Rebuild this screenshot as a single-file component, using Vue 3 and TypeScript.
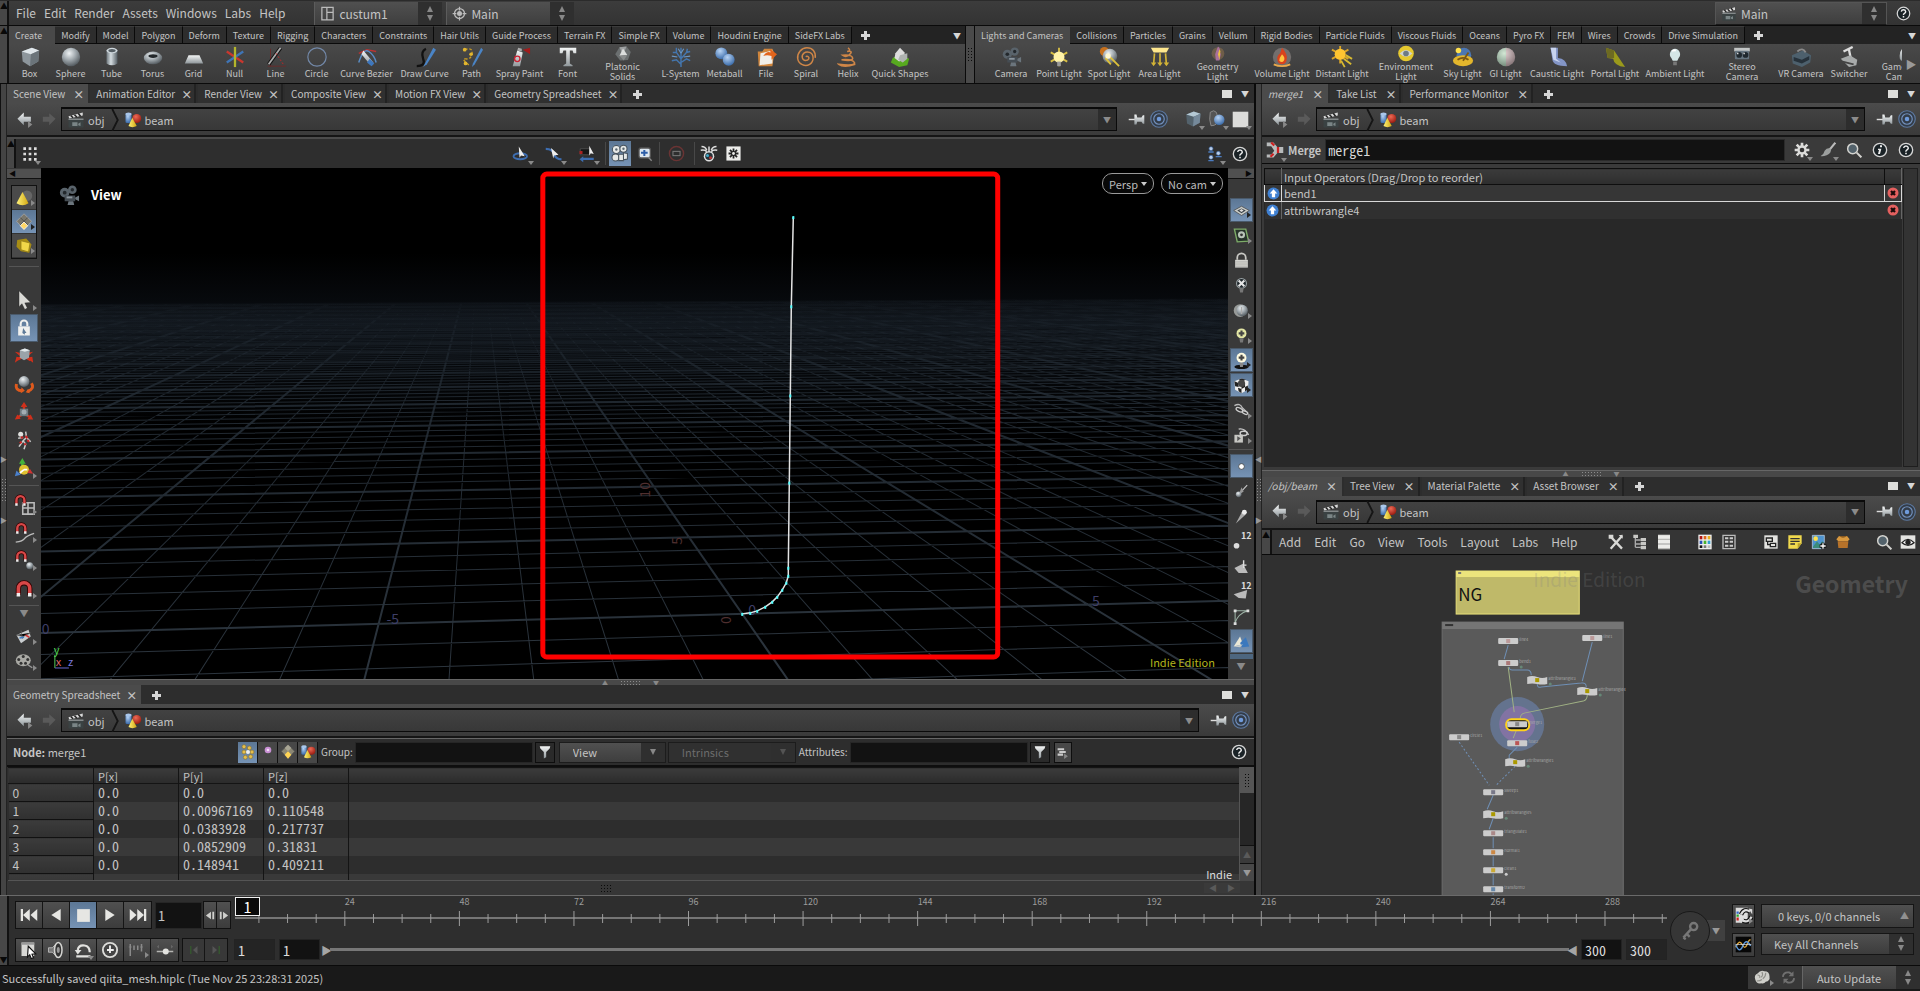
<script setup lang="ts">
import { h, ref } from 'vue'

type Tool = { n: string; l: string; w: number }

const spark = (c: string) => `<path d="M12 2v20M3 7l18 10M3 17 21 7" stroke="${c}" stroke-width="2"/>`
const magnet = '<path d="M4 17v-7a6.500 6.500 0 0 1 13 0v7" fill="none" stroke="#300" stroke-width="6"/><path d="M4 16v-6a6.500 6.500 0 0 1 13 0v6" fill="none" stroke="#d84848" stroke-width="4"/><path d="M2 15h4v4H2zM15 15h4v4h-4z" fill="#eee"/>'
const bulb = (c: string) => `<path d="M12 3a6 6 0 0 1 4 10l-1.500 3h-5L8 13a6 6 0 0 1 4-10z" fill="${c}"/><path d="M10 17h4v4h-4z" fill="#777"/>`
const reel = '<circle cx="8" cy="9" r="5" fill="#59636b"/><circle cx="8" cy="9" r="2" fill="#23282c"/><circle cx="16" cy="6" r="4.500" fill="#59636b"/><circle cx="16" cy="6" r="1.800" fill="#23282c"/><path d="M8 12h11v6H8z" fill="#454d54"/><path d="m19 14 4-2v6l-4-2zM12 18h5l1 4h-7z" fill="#6b757d"/><path d="M10 13h6v2h-6z" fill="#8b959d"/>'
const combo = '<rect x="2" y="3" width="8" height="13" rx="2" fill="url(#g-blue)"/><ellipse cx="6" cy="4" rx="4" ry="2" fill="#a9c6ea"/><circle cx="17" cy="10" r="6" fill="url(#g-red)"/><path d="m11 9 6 11q-6 3-11 0z" fill="url(#g-gold)"/>'

const icons: Record<string, string> = {
  box: '<path d="m3 6 11-4 8 3-1 12-9 5-8-5z" fill="#8d969c"/><path d="m3 6 11-4 8 3-9 4z" fill="#dfe6ea"/><path d="m13 9 9-4-1 12-9 5z" fill="#6b747a"/>',
  sphere: '<circle cx="12" cy="12" r="10" fill="url(#g-ball)"/>',
  tube: '<path d="M6 5v14q6 4 12 0V5z" fill="url(#g-tube)"/><ellipse cx="12" cy="5" rx="6" ry="3" fill="#cfd8dd"/><ellipse cx="12" cy="5" rx="4" ry="1.700" fill="#555e64"/>',
  torus: '<ellipse cx="12" cy="13" rx="10" ry="7" fill="url(#g-ball)"/><ellipse cx="12" cy="11" rx="5" ry="2" fill="#23282b"/>',
  grid: '<path d="M6 10h12l4 9H2z" fill="url(#g-silver)"/>',
  nul: '<path d="m3 6 18 12" stroke="#c8372e" stroke-width="2.500"/><path d="m3 18 18-12" stroke="#3f74b5" stroke-width="2.500"/><path d="M12 1v22" stroke="#b3b52c" stroke-width="2.500"/>',
  line: '<path d="M3 22h20M6 3v19" stroke="#6a2a2a" stroke-width="1"/><path d="m4 20 13-18" stroke="#111" stroke-width="4"/><path d="m4 20 13-18" stroke="#aaa" stroke-width="2"/><path d="m12 8 8 12" stroke="#c22" stroke-dasharray="2 2"/>',
  circle: '<circle cx="12" cy="12" r="10" fill="none" stroke="#7288a8" stroke-width="1.300"/>',
  bezier: '<path d="m3 8 9-4 10 2" fill="none" stroke="#b33" stroke-width="1.500"/><path d="M3 18Q8 2 14 6t8 12" fill="none" stroke="#5a8cc4" stroke-width="1.600"/><path d="m8 5 11 13-3 3L6 9z" fill="url(#g-silver)"/><path d="m15 14 5 5-3 3-5-4z" fill="#3e77bd"/>',
  draw: '<path d="M3 22q10 0 7-8T13 3" fill="none" stroke="#111" stroke-width="2.500"/><path d="m21 2-9 17-2 4 4-3 10-16z" fill="#4a84c6"/>',
  path: '<path d="M4 4q9-3 8 4T5 14t5 8" fill="none" stroke="#c69b24" stroke-width="1.500" stroke-dasharray="3 2"/><circle cx="4" cy="4" r="2" fill="#e2b62f"/><circle cx="11" cy="9" r="2" fill="#e2b62f"/><circle cx="5" cy="19" r="2" fill="#e2b62f"/><path d="m22 2-9 17-1 4 3-3 9-16z" fill="#4a84c6"/>',
  spray: '<path d="m9 5 6 2-3 15H4z" fill="url(#g-silver)"/><circle cx="9" cy="14" r="3" fill="none" stroke="#c23" stroke-width="1.500"/><path d="m10 2 4 1v3l-5-1z" fill="#aaa"/><path d="m15 4 8-2v7z" fill="#a11c1c"/>',
  font: '<path d="M3 2h18v6h-3l-1-3h-3v14l3 2v1H7v-1l3-2V5H7L6 8H3z" fill="url(#g-silver)"/>',
  platonic: '<path d="m7 3 10-1 6 8-4 11-11 1-7-9z" fill="#6b6f70"/><path d="m7 3 10-1-5 12z" fill="#9c9fa0"/><path d="m12 5 6 9-11 1z" fill="#dcdedd"/><path d="m7 15 11-1-5 8z" fill="#898c8c"/>',
  lsystem: '<path d="M12 23v-9m0 6-5-5-5 1m10-2-5-7-4 0m4 0 0-5m5 12V2m0 12 6-7 1-4m-1 4 4-1m-10 12 6-4 4 2" fill="none" stroke="#4476ae" stroke-width="1.600"/><path d="m8 12-6-1m10-3L9 3m3 5 3-5m0 9 7-1" stroke="#6b97c6" stroke-width="1.200"/>',
  metaball: '<circle cx="8" cy="8" r="6.500" fill="url(#g-blue)"/><circle cx="16" cy="15" r="6.500" fill="url(#g-blue)"/>',
  file: '<path d="M3 6h5l2-3h9l2 5-2 14H4z" fill="#cf853c"/><path d="m6 8 13-3v14L5 21z" fill="#f0eee9"/><path d="M9 11q4-6 8-4l-1-4 8 6-6 6v-4q-5-2-9 0z" fill="#e2641c"/>',
  spiral: '<path d="M12 12c1-2 4 0 3 2s-6 3-7-1 3-8 8-6 5 10 0 13-12 0-13-6 4-12 10-12 10 4 9 11" fill="none" stroke="#cf8647" stroke-width="1.600"/>',
  helix: '<path d="M12 2q4 3-1 4 7-1 3 3t-8 1q10-1 11 3t-12 2q12-1 14 3t-17 2q5 4 18 0" fill="none" stroke="#cf8647" stroke-width="1.700"/>',
  quick: '<path d="m4 13 7-4 11 5-2 7-9 2-9-5z" fill="#57a91f"/><path d="m7 8 5-6 5 5v7l-6 3-5-4z" fill="#dcdcdc"/><path d="m12 10 8-2v6l-5 4-5-3z" fill="#aeb2b0"/>',
  camera: reel,
  pointlight: spark('#d8bf45') + '<circle cx="12" cy="12" r="6" fill="#fff3a8"/><path d="M10 17h4v5h-4z" fill="#999"/>',
  spotlight: '<circle cx="7" cy="6" r="5" fill="#c7701c"/><circle cx="13" cy="11" r="8" fill="url(#g-ball)"/><path d="m11 10 12 12M14 20l-6-7" stroke="#dcc03b" stroke-width="2"/><circle cx="11" cy="11" r="3" fill="#fff8d0"/>',
  arealight: '<path d="M2 2h20l-3 5H5z" fill="#ffe88e"/><path d="M6 8 5 20M12 8v12M18 8l1 12" stroke="#d2b336" stroke-width="1.800"/><path d="m2 18 3 4 3-4zM9 18l3 4 3-4zM16 18l3 4 3-4z" fill="#d2b336"/>',
  geolight: '<circle cx="12" cy="12" r="9" fill="#b98a4f" opacity=".35"/><path d="M12 2q4 3 2 6l2 5-2 9h-5l-1-9 2-6z" fill="#a9709c"/><path d="M14 6q3 3 1 6l-1 9-2-8z" fill="#eec23f"/>',
  volumelight: '<circle cx="12" cy="12" r="10" fill="#918b88" opacity=".6"/><path d="M12 2q7 8 5 13a5 5 0 0 1-10 0q-1-4 3-7 1-3 2-6z" fill="#d9421c"/><path d="M12 9q4 4 2 7t-5 0q0-3 3-7z" fill="#ffc23d"/><path d="M3 20q9 4 18 0" stroke="#e9a94c" stroke-width="2" fill="none"/>',
  distantlight: '<g transform="translate(-2 -3)">' + spark('#dca527') + '<circle cx="12" cy="12" r="6" fill="#ffc531"/></g><path d="m14 14 8 6M11 16l4 7M16 10l7 4" stroke="#d8ba31" stroke-width="2"/>',
  envlight: '<circle cx="12" cy="12" r="11" fill="#e6c92f"/><path d="M3 12q9-10 18 0-9 9-18 0z" fill="#cfd3d2"/><circle cx="12" cy="12" r="4" fill="#6e7b83"/>',
  skylight: '<circle cx="13" cy="10" r="8" fill="#4b76b2"/><circle cx="7" cy="5" r="3" fill="#ffe04d"/><ellipse cx="12" cy="16" rx="11" ry="6" fill="#e3b62c"/><path d="M6 15q6-4 12 0M12 16l6-9" stroke="#7b5713" stroke-width="2" fill="none"/>',
  gilight: '<circle cx="12" cy="12" r="10" fill="url(#g-ball)"/><path d="M12 2a10 10 0 0 1 0 20z" fill="#d8a3a0" opacity=".4"/><path d="M12 2a10 10 0 0 0 0 20z" fill="#a9d6a5" opacity=".4"/>',
  caustic: '<path d="M5 2h8v11q9 1 10 9-15 0-16-7z" fill="#8395c6"/><path d="M5 2h6v12l5 4-8-3z" fill="#c9d4ee"/>',
  portal: '<path d="m2 2 9 3 12 18q-12-1-13-9l-6-1z" fill="#9a991b"/><path d="m2 2 9 3 0 8-7 0z" fill="#6d6a22"/>',
  ambient: bulb('#d5e6e6') + '<path d="M9 6q2-2 4-1" stroke="#fff" stroke-width="2"/>',
  stereo: '<rect x="1" y="4" width="22" height="5" fill="#c3c6c6"/><rect x="2" y="8" width="20" height="12" rx="1" fill="#66747f"/><circle cx="8" cy="14" r="4" fill="#20282e"/><circle cx="17" cy="14" r="4" fill="#20282e"/><path d="M5 11h2v2H5zM14 11h2v2h-2z" fill="#ddd"/>',
  vr: '<path d="m2 10 12-5 9 5-1 8-9 5-10-4z" fill="#4d606d"/><path d="m4 12 9 3 8-4v4l-8 4-9-3z" fill="#27323b"/><path d="M8 6q6-5 9 1" stroke="#8a8a8a" stroke-width="2" fill="none"/>',
  switcher: '<path d="m6 6 10-5M12 4l2 10" stroke="#ddd" stroke-width="2.500"/><path d="m3 14 10-4 8 5-1 6-8 2z" fill="#a7aaaa"/><path d="m5 17 12 3" stroke="#444" stroke-width="2"/>',
  gamepad: '<path d="M18 2q-11 4-9 17 2 6 6 1l3-6z" fill="url(#g-silver)"/>',
  layout: '<path d="M3 2h18v20H3zM11 2v20M11 10h10" fill="none" stroke="#bcbcbc" stroke-width="2"/>',
  target: '<circle cx="12" cy="12" r="8" fill="none" stroke="#bcbcbc" stroke-width="2"/><circle cx="12" cy="12" r="4" fill="#bcbcbc"/><path d="M12 1v6M12 17v6M1 12h6M17 12h6" stroke="#bcbcbc" stroke-width="2"/>',
  clap: '<path d="M2 10h20v12H2z" fill="#3a4243"/><path d="m2 7 19-5v4L3 10z" fill="#d8d8d8"/><path d="m5 6 3 3M10 5l3 3M15 3l3 4" stroke="#222" stroke-width="2"/><path d="M2 10h20v2H2z" fill="#84898a"/><path d="M7 15h7v5H7zM15 17l3-2v5l-3-1z" fill="#7a8586"/>',
  help: '<circle cx="12" cy="12" r="10" fill="#1a2226" stroke="#d6d6d6" stroke-width="2"/><path d="M8.500 9q.500-3 3.500-3t3.500 3q0 1.500-2 2.800T12 14.500" fill="none" stroke="#eee" stroke-width="2.200"/><path d="M10.800 16h2.400v2.500h-2.400z" fill="#eee"/>',
  info: '<circle cx="12" cy="12" r="10" fill="#1a2226" stroke="#d6d6d6" stroke-width="2"/><path d="M12 5h3v3h-3zM9 10h5l-2 8h-3l1.500-6H9z" fill="#eee"/>',
  back: '<path d="m2 11 9-9v6h10v7H11v5z" fill="url(#g-silver)"/><path d="m17 14 6 5-6 5z" fill="#888"/>',
  fwd: '<path d="m22 11-9-8v5H4v7h9v5z" fill="#5a5a5a"/>',
  combo,
  pin: '<path d="M1 12h9" stroke="#ddd" stroke-width="2"/><path d="M9 5h3l1 4h6l2-3h2v12h-2l-2-3h-6l-1 4H9z" fill="url(#g-silver)"/>',
  rings: '<circle cx="12" cy="12" r="11" fill="#333c48" stroke="#5d7aa3" stroke-width="1.500"/><circle cx="12" cy="12" r="7" fill="none" stroke="#7391bd" stroke-width="1.600"/><circle cx="12" cy="12" r="3" fill="#6f9bdc"/>',
  cube: '<path d="m3 6 10-4 9 3-1 12-9 5-8-4z" fill="#53626c"/><path d="m3 6 10-4 9 3-9 4z" fill="#b4c8d4"/><path d="m13 9 9-4-1 12-9 5z" fill="#75899a"/>',
  shade: '<path d="M3 3q5-4 8 0l3 9q-1 9-10 9-3-8-1-18z" fill="#555" stroke="#999"/><circle cx="15" cy="13" r="7" fill="url(#g-blue)"/>',
  white: '<path d="M1 1h22v22H1z" fill="#dcdcda"/>',
  dots: '<g fill="#ddd"><path d="M2 2h4v4H2zM10 2h4v4h-4zM18 2h4v4h-4zM2 10h4v4H2zM10 10h4v4h-4zM18 10h4v4h-4zM2 18h4v4H2zM10 18h4v4h-4zM18 18h4v4h-4z"/></g>',
  sel1: '<ellipse cx="11" cy="15" rx="9" ry="4" fill="none" stroke="#3d6db0" stroke-width="2.500"/><path d="m9 2 8 13-5-1-2 3z" fill="#eee"/>',
  sel2: '<path d="M1 5q9 0 11 7t10 7" fill="none" stroke="#3d6db0" stroke-width="3"/><path d="m8 4 10 9-6 1-1 4z" fill="#eee"/>',
  sel3: '<path d="M3 5h13v8H3z" fill="#161616" stroke="#555"/><path d="m2 19 5-4v2h14v3H7v3z" fill="#3d6db0"/><path d="m15 1 6 11-4-1-2 3z" fill="#eee"/><path d="M2 8h4v4H2z" fill="#a22"/>',
  people: '<g fill="#e6e9e7" stroke="#46525c" stroke-width="1.300"><circle cx="8" cy="7" r="5"/><circle cx="17" cy="6" r="4.500"/><circle cx="7" cy="17" r="4.500"/><path d="M11 13h6v8h-6zM17 11l5 1v7l-5 1z"/></g><circle cx="8" cy="7" r="1.500" fill="#5b6872"/><circle cx="17" cy="6" r="1.500" fill="#5b6872"/>',
  viewfit: '<rect x="3" y="3" width="17" height="15" rx="3" fill="#dde6ef" stroke="#555" stroke-width="2"/><path d="M11 6v9M6 10h10" stroke="#2d5ea8" stroke-width="3"/><path d="m17 17 5 5" stroke="#888" stroke-width="2"/>',
  deny: '<circle cx="12" cy="12" r="10" fill="none" stroke="#6a3434" stroke-width="2"/><rect x="7" y="9" width="10" height="6" fill="none" stroke="#777" stroke-width="1.500"/>',
  bug: '<circle cx="12" cy="15" r="7" fill="#ddd"/><circle cx="12" cy="15" r="5" fill="#263238"/><circle cx="10" cy="14" r="2" fill="#3fa9c9"/><circle cx="14" cy="17" r="2" fill="#b33"/><path d="M2 2q5 0 7 5M22 2q-5 0-7 5M1 7q6-1 8 2M23 7q-6-1-8 2M12 2v7" stroke="#ddd" stroke-width="2" fill="none"/>',
  gearbox: '<path d="M2 2h20v20H2z" fill="#ececea"/><g stroke="#222" stroke-width="2.500"><path d="M12 5v14M5 12h14M7 7l10 10M7 17 17 7"/></g><circle cx="12" cy="12" r="2" fill="#ececea"/>',
  tree3: '<g fill="#b9cde8" stroke="#3b64a0"><circle cx="6" cy="4" r="3"/><circle cx="17" cy="11" r="3"/><circle cx="6" cy="17" r="3"/></g><path d="M2 8h8v2H2zM13 15h9v2h-9zM2 21h8v2H2z" fill="#4b7cc0"/>',
  cone: '<circle cx="16" cy="9" r="7" fill="#666"/><path d="m10 4 8 15q-8 5-16 0z" fill="url(#g-gold)"/>',
  diamond: '<path d="m12 1 10 10-10 11L2 11z" fill="#7a776c" stroke="#aaa"/><path d="M7 6l10 10M17 6 7 16" stroke="#444"/><path d="m12 12 5 5-5 5-5-5z" fill="#ffd768" stroke="#fff"/>',
  goldbox: '<path d="m3 4 12-2 7 8-3 11-11-2-6-6z" fill="#a88d14"/><path d="m8 5 12 3-2 12-10-3z" fill="#f1d748" stroke="#8d7818"/>',
  arrow: '<path d="m6 1 14 14-7 .500 3 6-3 2-3.500-7L6 20z" fill="#dadad6" stroke="#222" stroke-width=".500"/>',
  lock: '<path d="M8 10V7a4 4 0 0 1 8 0v3" fill="none" stroke="#f0f0ee" stroke-width="2.500"/><path d="M5 10h14v11H5z" fill="#f0f0ee"/><path d="m11 12 4 6-2 0v2l-3-2z" fill="#5f7b99"/>',
  move: '<path d="m1 20 2-7 6 1zM23 20l-1-7-7 1zM1 7l6 1v4zM23 7l-6 1v4z" fill="#d1301b"/><path d="m4 16 5-2M20 17l-5-3" stroke="#d1301b" stroke-width="3"/><path d="m7 5 6-2 6 2-1 9-6 3-5-3z" fill="#9aa3a9"/><path d="m7 5 6-2 6 2-6 2z" fill="#e2e8ea"/>',
  rotate: '<path d="M3 12q-2 8 7 8m11-9q4 7-5 10" stroke="#df5a1d" stroke-width="3.500" fill="none"/><path d="m9 16 4 4-5 3zM19 23l-5-1 3-4z" fill="#df5a1d"/><circle cx="12" cy="9" r="6.500" fill="url(#g-ball)"/>',
  scale: '<path d="m12 0 4 6H8zM1 21l3-6 4 5zM23 21l-7 0 4-6z" fill="#d1301b"/><path d="M12 5v5M5 18l5-3M19 18l-5-3" stroke="#d1301b" stroke-width="3"/><path d="M7 8h10v9H7z" fill="#6f7a80"/><circle cx="12" cy="12" r="3" fill="#a3adb3"/>',
  pose: '<circle cx="8" cy="5" r="3" fill="#e0e0de"/><path d="m14 2 1 7-4 4-5 7M11 13l3 4-2 6M5 10l6-1M15 9l5 5" stroke="#ccc" stroke-width="1.800" fill="none"/><path d="m14 7 2 3M7 16l2-2M13 18l1-2M16 12l2 2M8 9h3" stroke="#c22" stroke-width="2.500"/>',
  handles: '<path d="m10 0 4 7H6z" fill="#45b23b"/><path d="M10 6v6" stroke="#45b23b" stroke-width="3"/><circle cx="12" cy="14" r="6" fill="#dfc12f"/><path d="m1 22 2-7 5 5z" fill="#4a80cb"/><path d="m23 19-7-1 3-5z" fill="#cf3434"/><path d="M12 14h4M12 14l-5 4" stroke="#fff" stroke-width="2"/>',
  maggrid: '<path d="M10 10h13v13H10zM16 10v13M10 16h13" stroke="#bbb" stroke-width="1.800" fill="none"/><g transform="scale(.7)">' + magnet + '</g>',
  magcurve: '<path d="M2 23q8-1 10-4t11-6" stroke="#bbb" stroke-width="1.500" fill="none"/><g transform="translate(1 0) scale(.7)">' + magnet + '</g>',
  magpoint: '<g transform="translate(1 0) scale(.7)">' + magnet + '</g><circle cx="18" cy="18" r="4" fill="url(#g-ball)"/>',
  magnet: '<g transform="translate(1 2)">' + magnet + '</g>',
  snip: '<path d="m2 12 16-7 3 9-13 9z" fill="#c9cdcf"/><path d="m8 6 2 11M2 12l9 2 10-5" stroke="#666"/><path d="m14 12 5 3" stroke="#c33" stroke-width="2"/><path d="m6 16 6-1" stroke="#3d7dc4" stroke-width="2"/>',
  film: '<ellipse cx="11" cy="11" rx="10" ry="8" fill="#a9a9a4"/><g fill="#333"><circle cx="11" cy="6" r="2"/><circle cx="5" cy="10" r="2"/><circle cx="17" cy="10" r="2"/><circle cx="8" cy="15" r="2"/><circle cx="14" cy="15" r="2"/></g><path d="m17 17 6 4" stroke="#999" stroke-width="2"/>',
  plane: '<path d="m12 6 11 6-11 7L1 12z" fill="#c8cbc8" stroke="#444"/><path d="m12 9 6 3-6 4-6-4z" fill="#3a4248"/><path d="m12 10 3 2-3 2-3-2z" fill="#ddd"/>',
  ghost: '<path d="m2 3 16 0 4 17-16 1z" fill="#26332a" stroke="#7dac68" stroke-width="2"/><circle cx="12" cy="11" r="5" fill="#b8c5b8"/><circle cx="12" cy="11" r="2" fill="#333"/>',
  padlock: '<path d="M6 11V8a6 6 0 0 1 12 0v3" fill="none" stroke="#c8c8c4" stroke-width="2.500"/><path d="M3 11h18v11H3z" fill="#d5d5d0"/><path d="M3 14h18M3 17h18M3 20h18" stroke="#a5a5a0"/>',
  lampx: '<circle cx="12" cy="9" r="7" fill="#20282c" stroke="#9aa2a4" stroke-width="1.500"/><path d="M9 16h6l-1 6h-4z" fill="#777"/><path d="m8 5 8 8M16 5l-8 8" stroke="#e6e6e6" stroke-width="3"/>',
  lampdisc: '<circle cx="10" cy="12" r="9" fill="#979a98"/><circle cx="13" cy="12" r="8" fill="url(#g-ball)"/><path d="M12 7v10" stroke="#aaa" stroke-width="2"/>',
  lampplus: '<circle cx="12" cy="9" r="7" fill="#e3e6a5"/><path d="M9 16h6l-1 6h-4z" fill="#777"/><path d="M12 5v8M8 9h8" stroke="#444" stroke-width="3"/>',
  lampfloor: '<ellipse cx="12" cy="21" rx="10" ry="3" fill="#111"/><circle cx="12" cy="8" r="7" fill="#fffbe0"/><path d="M9 15h6l-1 6h-4z" fill="#888"/><path d="M12 4v8M8 8h8" stroke="#444" stroke-width="3"/>',
  checker: '<path d="m2 6 10-4 10 4-1 12-9 5-9-5z" fill="#eee"/><path d="m2 6 5 2 1 6-5-1zM12 10l5-2v6l-5 3zM7 15l5 2v6l-4-3zM17 14l4-2v6l-4 2zM8 4l6 2 4-2-6-2z" fill="#222"/><circle cx="12" cy="9" r="5" fill="#444"/>',
  glasses: '<path d="M2 5q8-4 11 3l8 8" stroke="#bbb" stroke-width="2" fill="none"/><ellipse cx="9" cy="11" rx="5" ry="2.500" transform="rotate(25 9 11)" fill="#333" stroke="#ccc" stroke-width="1.800"/><ellipse cx="17" cy="15" rx="4" ry="2" transform="rotate(25 17 15)" fill="#333" stroke="#ccc" stroke-width="1.800"/>',
  glassbox: '<path d="M8 3q8-2 14 8" stroke="#ccc" stroke-width="2" fill="none"/><ellipse cx="15" cy="9" rx="5" ry="3" fill="#333" stroke="#ccc" stroke-width="2"/><path d="M2 11h12v11H2z" fill="#c7c7c3"/><path d="m6 13 5 3-5 4z" fill="#555"/>',
  pt: '<circle cx="12" cy="12" r="4" fill="#fff" stroke="#333"/>',
  ptnormal: '<path d="m8 16 12-13" stroke="#ccc" stroke-width="1.500"/><path d="m12 6 3 6-7 5z" fill="#999"/><circle cx="8" cy="16" r="4" fill="url(#g-ball)"/>',
  pttrail: '<path d="m4 22 9-17 5 4z" fill="#aaa"/><circle cx="16" cy="6" r="3.500" fill="#eee"/>',
  ptnum: '<circle cx="5" cy="18" r="4" fill="#ddd"/>',
  prim: '<path d="m2 14 12-6 7 13-13 0z" fill="#bbb"/><path d="M15 14V3m0 7h4" stroke="#ddd" stroke-width="2"/>',
  primnum: '<path d="m1 16 19-6-2 12-10-1z" fill="#bbb"/>',
  hull: '<path d="M3 21V4h18Q7 8 3 21z" fill="none" stroke="#9db3a6" stroke-width="1.500"/><path d="M1 2h4v4H1zM19 2h4v4h-4zM1 20h4v4H1z" fill="#ddd"/>',
  slope: '<path d="m1 19 9-14 4 11z" fill="#eae7d6"/><path d="m10 14 8-8 5 13-10 1z" fill="#3b78bd"/><path d="m1 19 13-3-4 4z" fill="#c9ccc8"/>',
  merge: '<path d="M1 2h9l5 6h8v8h-8l-5 6H1v-4h6l4-5-4-6H1z" fill="#b7babb"/><path d="m7 2 4 4M6 21l4-4M16 8v8" stroke="#c22" stroke-width="3"/>',
  gear: '<g stroke="#dcdcda" stroke-width="4"><path d="M12 1v22M1 12h22M4 4l16 16M4 20 20 4"/></g><circle cx="12" cy="12" r="7" fill="#dcdcda"/><circle cx="12" cy="12" r="3.500" fill="#333"/>',
  brush: '<path d="m23 1-9 11" stroke="#bbb" stroke-width="3"/><path d="M16 10q2 6-6 10-6 2-9 1 5-3 6-8 4-5 9-3z" fill="#9c9f9e"/>',
  search: '<circle cx="10" cy="10" r="7.500" fill="#53626b" stroke="#d4d4d0" stroke-width="2.200"/><path d="m16 16 7 7" stroke="#d4d4d0" stroke-width="3"/>',
  up: '<circle cx="12" cy="12" r="11" fill="#3f80d2"/><path d="m12 4 7 8h-4v7H9v-7H5z" fill="#fff"/>',
  del: '<circle cx="12" cy="12" r="11" fill="#e4605f"/><path d="m8 8 8 8M16 8l-8 8" stroke="#1a0a0a" stroke-width="4.500"/>',
  tools: '<path d="M3 3 21 22M21 3 4 22" stroke="#d9d9d6" stroke-width="3.500"/><path d="M1 1h7v6H1zM16 2l6-1v6z" fill="#d9d9d6"/>',
  hier: '<path d="M5 4v16M5 9h8M5 15h8M5 20h8" stroke="#aaa" stroke-width="2" fill="none"/><path d="M2 1h7v5H2zM13 6h8v5h-8zM13 12h8v5h-8zM13 18h8v5h-8z" fill="#c9c9c6"/>',
  rows: '<path d="M3 1h18v22H3z" fill="#b9b9b6"/><path d="M3 2h18v5H3zM3 9h18v5H3zM3 16h18v5H3z" fill="#ecece9"/>',
  palette: '<path d="M2 1h20v22H2z" fill="#eee"/><path d="M4 3h4v5H4z" fill="#b01818"/><path d="M10 3h4v5h-4z" fill="#e0641c"/><path d="M16 3h4v5h-4z" fill="#e8b020"/><path d="M4 10h4v5H4z" fill="#2850b8"/><path d="M10 10h4v5h-4z" fill="#49b02c"/><path d="M16 10h4v5h-4z" fill="#30a0d0"/><path d="M4 17h4v4H4z" fill="#111"/><path d="M10 17h4v4h-4z" fill="#777"/><path d="M16 17h4v4h-4z" fill="#bbb"/>',
  cells: '<path d="M3 2h18v20H3z" fill="none" stroke="#bbb" stroke-width="2"/><path d="M6 5h5v3H6zM13 5h5v3h-5zM6 10h5v3H6zM13 10h5v3h-5zM6 16h5v3H6zM13 16h5v3h-5z" fill="#ccc"/>',
  window: '<path d="M2 2h20v20H2z" fill="#e4e4e1"/><path d="M5 6h9v5H5zM11 14h8v5h-8zM7 11v5h4" fill="none" stroke="#222" stroke-width="2"/>',
  note: '<path d="M2 2h20v12l-6 8H2z" fill="#f0d94e"/><path d="M5 7h14M5 11h14M5 15h7" stroke="#333" stroke-width="2"/><path d="M22 14h-6v8z" fill="#b8a22c"/>',
  image: '<path d="M2 2h18v20H2z" fill="#4f94cf" stroke="#cde"/><circle cx="7" cy="7" r="3.500" fill="#ffe04d"/><path d="m3 19 6-8 4 5 4-5 3 4v6H3z" fill="#3b8c7c"/><path d="M18 13v10M13 18h10" stroke="#111" stroke-width="5"/><path d="M18 14v8M14 18h8" stroke="#fff" stroke-width="2"/>',
  crate: '<path d="m2 8 4-5h12l4 5-3 3H5z" fill="#d8983f"/><path d="M4 11h16l-1 10H5z" fill="#b6722a"/><path d="M6 3q6 5 12 0" fill="#8a5a20"/>',
  eye: '<path d="M1 2h22v20H1z" fill="#e4e4e1"/><path d="M3 13q9-10 18 0-9 8-18 0z" fill="#fff" stroke="#222" stroke-width="2"/><circle cx="12" cy="12.500" r="4" fill="#222"/>',
  ptcloud: '<g fill="#e6bf4a" stroke="#88743a"><circle cx="6" cy="4" r="3"/><circle cx="14" cy="6" r="3"/><circle cx="6" cy="12" r="3"/><circle cx="18" cy="12" r="3"/><circle cx="8" cy="20" r="3"/><circle cx="16" cy="19" r="3"/></g><circle cx="12" cy="12" r="3" fill="#eee"/>',
  vert: '<circle cx="12" cy="9" r="5" fill="#c890d4"/><circle cx="12" cy="9" r="2" fill="#f3dcf6"/>',
  diamond2: '<path d="m12 1 10 10-10 11L2 11z" fill="#8b8774" stroke="#555"/><path d="m12 11 5 5-5 6-5-6z" fill="#ffd454"/><path d="m12 1 5 5-5 5-5-5z" fill="#a8a594"/>',
  funnel: '<path d="M3 2h18l-1 4-6 6v9l-4 2V12L4 6z" fill="url(#g-silver)"/>',
  listadd: '<path d="M3 4h12v4H3zM6 9h12v4H6zM3 14h10v4H3z" fill="#ccc"/><path d="m15 14 7 5-7 5z" fill="#888"/>',
  first: '<path d="M1 4h3v16H1zM13 4v16L4 12zM23 4v16l-9-8z" fill="#e6e6e3"/>',
  prev: '<path d="M19 3v18L5 12z" fill="#e6e6e3"/>',
  stop: '<path d="M3 3h18v18H3z" fill="#e6e6e3"/>',
  play: '<path d="M5 3v18l14-9z" fill="#e6e6e3"/>',
  last: '<path d="M20 4h3v16h-3zM11 4v16l9-8zM1 4v16l9-8z" fill="#e6e6e3"/>',
  stepb: '<path d="M13 4v16L2 12zM16 4h4v16h-4z" fill="#d0d0cd"/>',
  stepf: '<path d="M11 4v16l11-8zM4 4h4v16H4z" fill="#d0d0cd"/>',
  page: '<path d="M2 2h17v18H2z" fill="#d8d8d5"/><path d="M2 2h17v3H2z" fill="#999"/><path d="m11 7 10 10-5 .500 2 5-3 1-2-5-3 3z" fill="#fff" stroke="#111" stroke-width="1.500"/>',
  sound: '<path d="M2 9h5l7-7v20l-7-7H2z" fill="#777" stroke="#ccc"/><ellipse cx="15" cy="12" rx="5" ry="10" fill="#333" stroke="#d5d5d2" stroke-width="2"/><ellipse cx="15" cy="12" rx="2" ry="4" fill="#999"/>',
  loop: '<path d="M5 12q1-7 9-6 7 1 7 9" fill="none" stroke="#e2e2df" stroke-width="3"/><path d="m1 12 9 0-5 6zM3 19h19v3H3z" fill="#e2e2df"/>',
  clock: '<circle cx="12" cy="12" r="9.500" fill="#444" stroke="#dcdcd9" stroke-width="2.500"/><path d="M12 6v10M8 12h9" stroke="#eee" stroke-width="2.500"/>',
  ticks: '<path d="M3 4v16M8 6v6M13 6v6M18 4v10" stroke="#8a8a8a" stroke-width="2"/><path d="M1 8h4M16 8h4" stroke="#8a8a8a"/>',
  slide: '<path d="M1 14h22" stroke="#b5b5b2" stroke-width="2"/><circle cx="13" cy="14" r="4" fill="#e2e2df"/><path d="M4 5v5L1 7.500zM20 5v5l3-2.500z" fill="#666"/>',
  kprev: '<path d="M4 4h3v16H4z" fill="#35552f"/><path d="M19 4v16l-9-8z" fill="#555"/>',
  knext: '<path d="M17 4h3v16h-3z" fill="#35552f"/><path d="M5 4v16l9-8z" fill="#555"/>',
  key: '<g fill="none" stroke="#777" stroke-width="3"><circle cx="16" cy="7" r="4.500"/><path d="M13 10 3 21M7 16l4 4M3 21l3 2"/></g>',
  keysync: '<path d="M1 1h16v20H1z" fill="#ddd"/><path d="M2 6h3v3H2z" fill="#36c"/><path d="M2 10h3v3H2z" fill="#2a2"/><path d="M2 14h3v4H2z" fill="#c22"/><path d="M20 6q-8-5-12 4m14 3q-4 9-12 5" fill="none" stroke="#111" stroke-width="6"/><path d="M20 6q-8-5-12 4m14 3q-4 9-12 5" fill="none" stroke="#ddd" stroke-width="3"/><path d="m18 2 5 1v7zM8 22l5-7-7 1z" fill="#ddd"/>',
  curves: '<path d="M1 1h22v22H1z" fill="#060606"/><path d="M1 16q5-12 9-4t7 0 5-6" stroke="#d8a33b" stroke-width="2" fill="none"/><path d="M1 12q5 14 10 2T22 14" stroke="#5c97d8" stroke-width="2" fill="none"/><path d="M1 12h22" stroke="#ddd"/>',
  brain: '<path d="M3 14q-2-6 3-8 4-5 9-3 7 0 7 7 1 6-5 7-2 3-6 2-6 2-8-5z" fill="#cfcfca"/><path d="M6 8q4 0 3 4m3-8q2 4-1 7m6-6q0 5-4 8m-8 3q5 0 7-2" stroke="#8f8f8a" fill="none" stroke-width="1.500"/>',
  sync: '<path d="M3 11q1-8 10-7l5 3M21 13q-1 8-10 7l-5-3" fill="none" stroke="#707070" stroke-width="3"/><path d="M20 2v8h-8zM4 22v-8h8z" fill="#707070"/>',
}

const Ico = (p: { n: string; s?: number }) =>
  h('svg', { viewBox: '0 0 24 24', width: p.s ?? 18, height: p.s ?? 18, 'aria-hidden': 'true', innerHTML: icons[p.n] ?? '' })
Ico.props = ['n', 's']

const tools = (rows: string): Tool[] =>
  rows.split('|').map((r) => {
    const [n, l, w] = r.split(':')
    return { n, l, w: Number(w) }
  })

const shelves = [
  {
    cls: 'left',
    tabs: ['Create', 'Modify', 'Model', 'Polygon', 'Deform', 'Texture', 'Rigging', 'Characters', 'Constraints', 'Hair Utils', 'Guide Process', 'Terrain FX', 'Simple FX', 'Volume', 'Houdini Engine', 'SideFX Labs'],
    tools: tools('box:Box:41|sphere:Sphere:41|tube:Tube:41|torus:Torus:41|grid:Grid:41|nul:Null:41|line:Line:41|circle:Circle:41|bezier:Curve Bezier:59|draw:Draw Curve:57|path:Path:37|spray:Spray Paint:59|font:Font:37|platonic:Platonic/Solids:73|lsystem:L-System:43|metaball:Metaball:45|file:File:38|spiral:Spiral:42|helix:Helix:42|quick:Quick Shapes:62'),
  },
  {
    cls: 'right',
    tabs: ['Lights and Cameras', 'Collisions', 'Particles', 'Grains', 'Vellum', 'Rigid Bodies', 'Particle Fluids', 'Viscous Fluids', 'Oceans', 'Pyro FX', 'FEM', 'Wires', 'Crowds', 'Drive Simulation'],
    tools: tools('camera:Camera:48|pointlight:Point Light:48|spotlight:Spot Light:52|arealight:Area Light:49|geolight:Geometry/Light:67|volumelight:Volume Light:62|distantlight:Distant Light:58|envlight:Environment/Light:70|skylight:Sky Light:43|gilight:GI Light:43|caustic:Caustic Light:60|portal:Portal Light:56|ambient:Ambient Light:64|stereo:Stereo/Camera:70|vr:VR Camera:48|switcher:Switcher:48|gamepad:Gamepad/Camera:58'),
  },
]

const menu = ['File', 'Edit', 'Render', 'Assets', 'Windows', 'Labs', 'Help']
const netMenu = ['Add', 'Edit', 'Go', 'View', 'Tools', 'Layout', 'Labs', 'Help']
const netIcons = [['tools', 'hier', 'rows'], ['palette', 'cells'], ['window', 'note', 'image', 'crate'], ['search', 'eye']]

const panes = {
  scene: ['Scene View', 'Animation Editor', 'Render View', 'Composite View', 'Motion FX View', 'Geometry Spreadsheet'],
  sheet: ['Geometry Spreadsheet'],
  parm: ['merge1', 'Take List', 'Performance Monitor'],
  net: ['/obj/beam', 'Tree View', 'Material Palette', 'Asset Browser'],
}

const leftTools = ['arrow', 'lock', 'move', 'rotate', 'scale', 'pose', 'handles']
const snapTools = ['maggrid', 'magcurve', 'magpoint', 'magnet']
const displayA = ['plane', 'ghost', 'padlock', 'lampx', 'lampdisc', 'lampplus', 'lampfloor', 'checker', 'glasses', 'glassbox']
const displayB = ['pt', 'ptnormal', 'pttrail', 'ptnum', 'prim', 'primnum', 'hull', 'slope']
const litDisplay = new Set(['plane', 'lampfloor', 'checker', 'pt', 'slope'])
const flyDisplay = new Set(['plane', 'ghost', 'lampdisc', 'lampplus', 'lampfloor', 'checker', 'glasses', 'glassbox'])

const points = [
  ['0.0', '0.0', '0.0'],
  ['0.0', '0.00967169', '0.110548'],
  ['0.0', '0.0383928', '0.217737'],
  ['0.0', '0.0852909', '0.31831'],
  ['0.0', '0.148941', '0.409211'],
  ['', '', ''],
]

// Ground plane projected onto the viewport, u across and v in depth.
const project = (u: number, v: number) => {
  const w = 1 + 0.0051 * u + 0.0505 * v
  return [((742 + 74.5 * u + 24.2 * v) / w - 41).toFixed(1), ((613 + 1.2 * u + 11.84 * v) / w - 168).toFixed(1)]
}
const gridPath = (major: boolean) => {
  let d = ''
  for (let v = -4; v <= 90; v++) {
    if ((v % 5 === 0) === major) d += `M${project(-80, v)}L${project(110, v)}`
  }
  for (let u = -80; u <= 110; u++) {
    if ((u % 5 === 0) === major) d += `M${project(u, -4)}L${project(u, 90)}`
  }
  return d
}
const minorGrid = gridPath(false)
const majorGrid = gridPath(true)
const curve = [[752, 49], [750, 138], [749, 227], [748, 314], [747, 399], [747, 407], [745, 414], [741, 421], [736, 428], [731, 433], [724, 438], [716, 442], [709, 444], [701, 445]]

const frame = ref(1)
const at = (f: number) => `${(((f - 1) / 300) * 100).toFixed(2)}%`
const ticks = Array.from({ length: 50 }, (_, i) => (i + 1) * 6)

const nodes = [
  { x: 246, y: 86, l: 'line4', c: '#b99' },
  { x: 330, y: 83, l: 'line1', c: '#b99' },
  { x: 246, y: 108, l: 'bend1', c: '#a77', d: '#687' },
  { x: 275, y: 125, l: 'attribwrangle3', c: '#a90', wave: true, d: '#687' },
  { x: 325, y: 136, l: 'attribwrangle4', c: '#a90', wave: true, d: '#687' },
  { x: 255, y: 169, l: 'merge1', c: '#888' },
  { x: 255, y: 188, l: 'fuse2', c: '#b55' },
  { x: 253, y: 207, l: 'attribwrangle1', c: '#a90', wave: true, d: '#687' },
  { x: 197, y: 182, l: 'circle1', c: '#888' },
  { x: 231, y: 237, l: 'sweep1', c: '#778' },
  { x: 231, y: 259, l: 'attribwrangle5', c: '#a90', wave: true, d: '#687' },
  { x: 231, y: 278, l: 'triangulate1', c: '#a88' },
  { x: 231, y: 297, l: 'normal1', c: '#c84' },
  { x: 231, y: 315, l: 'clean1', c: '#ca3', d: '#ccc' },
  { x: 231, y: 334, l: 'transform2', c: '#68a' },
]
</script>

<template>
  <div class="app">
    <svg class="defs" width="0" height="0" aria-hidden="true">
      <defs>
        <radialGradient id="g-ball" cx=".4" cy=".3" r=".7"><stop offset="0" stop-color="#eef2f4" /><stop offset=".5" stop-color="#a3abb0" /><stop offset="1" stop-color="#565d62" /></radialGradient>
        <radialGradient id="g-blue" cx=".4" cy=".3" r=".7"><stop offset="0" stop-color="#b9d4f4" /><stop offset="1" stop-color="#3c6dab" /></radialGradient>
        <radialGradient id="g-red" cx=".4" cy=".3" r=".7"><stop offset="0" stop-color="#ee6a55" /><stop offset="1" stop-color="#9c1d12" /></radialGradient>
        <linearGradient id="g-gold"><stop offset="0" stop-color="#fff27a" /><stop offset="1" stop-color="#d2a712" /></linearGradient>
        <linearGradient id="g-tube"><stop offset="0" stop-color="#6d767c" /><stop offset=".4" stop-color="#d5dde1" /><stop offset="1" stop-color="#555e64" /></linearGradient>
        <linearGradient id="g-silver" x2="0" y2="1"><stop offset="0" stop-color="#f4f6f6" /><stop offset="1" stop-color="#8f979b" /></linearGradient>
      </defs>
    </svg>

    <header class="menubar">
      <span class="grip">▲</span>
      <nav class="menu"><button v-for="m in menu" :key="m">{{ m }}</button></nav>
      <label class="pick desk"><Ico n="layout" :s="15" /><select aria-label="Desktop"><option>custum1</option></select><i class="spin" /></label>
      <label class="pick desk"><Ico n="target" :s="15" /><select aria-label="Radial menu"><option>Main</option></select><i class="spin" /></label>
      <span class="fill" />
      <label class="pick take"><Ico n="clap" :s="16" /><select aria-label="Take"><option>Main</option></select><i class="spin" /></label>
      <button class="plain help" aria-label="Help"><Ico n="help" :s="15" /></button>
    </header>

    <div class="shelves">
      <span class="grip">▲</span>
      <template v-for="(s, i) in shelves" :key="s.cls">
        <span v-if="i" class="shelf-split"><i class="dots tall" /></span>
        <section class="shelf" :class="s.cls">
          <div class="shelf-tabs">
            <button v-for="(t, k) in s.tabs" :key="t" :class="{ on: !k }">{{ t }}</button>
            <button class="add" aria-label="Add shelf tab" />
            <span class="fill" />
            <button class="tri" aria-label="Shelf options">▼</button>
          </div>
          <div class="shelf-body">
            <div class="shelf-tools">
              <button v-for="t in s.tools" :key="t.n" :style="{ width: t.w + 'px' }" :class="{ two: t.l.includes('/') }">
                <Ico :n="t.n" :s="22" />
                <span><template v-for="(p, k) in t.l.split('/')" :key="k"><br v-if="k" />{{ p }}</template></span>
              </button>
            </div>
            <button v-if="i" class="more" aria-label="More tools">▶</button>
          </div>
        </section>
      </template>
    </div>

    <main class="work">
      <div class="edge"><i class="car">▶</i><i class="dots" /><i class="car">▶</i></div>

      <div class="col">
        <div class="tabs dense">
          <div v-for="(t, k) in panes.scene" :key="t" class="tab" :class="{ on: !k }"><button>{{ t }}</button><button class="x" :aria-label="'Close ' + t">×</button></div>
          <button class="add" aria-label="Add pane tab" /><span class="fill" /><i class="sq" /><button class="tri" aria-label="Pane options">▼</button>
        </div>
        <div class="pathrow">
          <button class="plain" aria-label="Back"><Ico n="back" :s="17" /></button><button class="plain" aria-label="Forward"><Ico n="fwd" :s="17" /></button>
          <div class="path"><a href="#obj"><Ico n="clap" :s="18" />obj</a><svg class="chev" viewBox="0 0 8 24"><path d="m1 0 6 12-6 12" fill="none" stroke="#151515" stroke-width="2" /></svg><a href="#beam"><Ico n="combo" :s="18" />beam</a><span class="fill" /><button class="drop" aria-label="Path history">▼</button></div>
          <Ico class="pin" n="pin" :s="17" /><Ico n="rings" :s="18" />
          <span class="trio"><button class="plain fly down" aria-label="Display"><Ico n="cube" :s="18" /></button><button class="plain fly down" aria-label="Shading"><Ico n="shade" :s="18" /></button><button class="plain fly down" aria-label="Background"><Ico n="white" :s="17" /></button></span>
        </div>
        <div class="viewbar">
          <span class="grip">▲</span>
          <div class="vb-l"><button class="plain fly down" aria-label="View layout"><Ico n="dots" :s="16" /></button></div>
          <div class="vb-c">
            <button v-for="n in ['sel1', 'sel2', 'sel3']" :key="n" class="plain fly down wide" :aria-label="n"><Ico :n="n" :s="18" /></button>
            <i class="sep" /><button class="plain lit" aria-label="Select objects"><Ico n="people" :s="19" /></button><button class="plain" aria-label="Frame"><Ico n="viewfit" :s="16" /></button>
            <i class="sep" /><button class="plain mid" aria-label="Disable"><Ico n="deny" :s="17" /></button><i class="sep" />
            <button class="plain" aria-label="Snapshot"><Ico n="bug" :s="18" /></button><button class="plain" aria-label="Settings"><Ico n="gearbox" :s="17" /></button>
          </div>
          <div class="vb-r"><button class="plain fly down" aria-label="Groups"><Ico n="tree3" :s="16" /></button><button class="plain" aria-label="Help"><Ico n="help" :s="16" /></button></div>
        </div>

        <div class="stage">
          <div class="tools">
            <span class="slim">◀</span>
            <div class="modes"><button class="fly" aria-label="Objects"><Ico n="cone" /></button><button class="fly lit" aria-label="Geometry"><Ico n="diamond" /></button><button class="fly" aria-label="Dynamics"><Ico n="goldbox" /></button></div>
            <hr /><div class="space" />
            <button v-for="n in leftTools" :key="n" class="tool" :class="{ lit: n === 'lock', fly: n === 'arrow' || n === 'handles' }" :aria-label="n"><Ico :n="n" :s="20" /></button>
            <hr />
            <button v-for="n in snapTools" :key="n" class="tool fly" :aria-label="n"><Ico :n="n" :s="21" /></button>
            <hr /><span class="caret">▼</span>
            <button class="tool low fly" aria-label="Snapshot tool"><Ico n="snip" :s="18" /></button><button class="tool low fly" aria-label="Flipbook"><Ico n="film" :s="18" /></button>
          </div>

          <div class="view">
            <svg class="scene" viewBox="0 0 1187 510" preserveAspectRatio="xMidYMid slice" role="img" aria-label="Viewport">
              <defs>
                <linearGradient id="fade" gradientUnits="userSpaceOnUse" x1="0" y1="110" x2="0" y2="510"><stop offset="0" stop-color="#26303a" stop-opacity="0" /><stop offset=".12" stop-color="#26303a" stop-opacity=".3" /><stop offset=".3" stop-color="#242d36" stop-opacity=".85" /><stop offset="1" stop-color="#2c353e" /></linearGradient>
                <linearGradient id="haze" gradientUnits="userSpaceOnUse" x1="0" y1="85" x2="0" y2="260"><stop offset="0" stop-color="#0a0e13" stop-opacity="0" /><stop offset=".4" stop-color="#0a0e13" /><stop offset="1" stop-color="#0a0e13" stop-opacity="0" /></linearGradient>
              </defs>
              <rect width="1187" height="510" fill="#000" />
              <rect y="85" width="1187" height="175" fill="url(#haze)" />
              <path :d="minorGrid" stroke="url(#fade)" stroke-width="1" fill="none" />
              <path :d="majorGrid" stroke="url(#fade)" stroke-width="2" fill="none" />
              <g class="axis blue"><text x="346" y="455">-5</text><text x="1050" y="437">5</text><text x="2" y="465">0</text><text x="707" y="446">0</text></g>
              <g class="axis red"><text transform="rotate(-90 690 455)" x="690" y="455">0</text><text transform="rotate(-90 641 376)" x="641" y="376">5</text><text transform="rotate(-90 609 329)" x="609" y="329">10</text></g>
              <polyline :points="curve.join(' ')" fill="none" stroke="#e4e4e4" stroke-width="1.500" />
              <g fill="#5ff"><rect v-for="(p, k) in curve" :key="k" :x="p[0] - 1" :y="p[1] - 1" width="2" height="3" /></g>
              <rect x="502" y="6" width="454" height="482" rx="4" fill="none" stroke="#f00" stroke-width="5" />
              <path d="M15 499v-13" stroke="#5c5" fill="none" /><path d="M15 499h14" stroke="#66c" fill="none" />
              <g class="gnomon"><text x="14" y="485" fill="#5d5">y</text><text x="16" y="497" fill="#d66">x</text><text x="28" y="497" fill="#77d">z</text></g>
            </svg>
            <div class="hud-l"><Ico n="camera" :s="23" /><strong>View</strong></div>
            <div class="hud-r"><button>Persp<i /></button><button>No cam<i /></button></div>
            <span class="indie">Indie Edition</span>
          </div>

          <div class="display">
            <span class="slim end">▶</span>
            <div class="space" />
            <button v-for="n in displayA" :key="n" :class="{ lit: litDisplay.has(n), fly: flyDisplay.has(n) }" :aria-label="n"><Ico :n="n" :s="17" /></button>
            <hr />
            <button v-for="n in displayB" :key="n" :class="{ lit: litDisplay.has(n) }" :aria-label="n"><Ico :n="n" :s="17" /><b v-if="n.endsWith('num')">12</b></button>
            <i class="peek" /><span class="caret">▼</span>
          </div>
        </div>

        <div class="split"><i>▲</i><i class="dots flat" /><i>▼</i></div>

        <div class="tabs dense">
          <div v-for="t in panes.sheet" :key="t" class="tab on"><button>{{ t }}</button><button class="x" aria-label="Close tab">×</button></div>
          <button class="add" aria-label="Add pane tab" /><span class="fill" /><i class="sq" /><button class="tri" aria-label="Pane options">▼</button>
        </div>
        <div class="pathrow">
          <button class="plain" aria-label="Back"><Ico n="back" :s="17" /></button><button class="plain" aria-label="Forward"><Ico n="fwd" :s="17" /></button>
          <div class="path"><a href="#obj"><Ico n="clap" :s="18" />obj</a><svg class="chev" viewBox="0 0 8 24"><path d="m1 0 6 12-6 12" fill="none" stroke="#151515" stroke-width="2" /></svg><a href="#beam"><Ico n="combo" :s="18" />beam</a><span class="fill" /><button class="drop" aria-label="Path history">▼</button></div>
          <Ico class="pin" n="pin" :s="17" /><Ico n="rings" :s="18" />
        </div>
        <div class="noderow">
          <span class="node"><b>Node:</b> merge1</span>
          <div class="kinds"><button class="lit" aria-label="Points"><Ico n="ptcloud" :s="16" /></button><button aria-label="Vertices"><Ico n="vert" :s="16" /></button><button aria-label="Primitives"><Ico n="diamond2" :s="16" /></button><button aria-label="Detail"><Ico n="combo" :s="16" /></button></div>
          <label for="grp">Group:</label><input id="grp" type="text" />
          <button class="flt" aria-label="Filter groups"><Ico n="funnel" :s="14" /></button>
          <label class="pick view-pick"><select aria-label="View"><option>View</option></select><i class="spin one" /></label>
          <label class="pick view-pick off"><select aria-label="Intrinsics" disabled><option>Intrinsics</option></select><i class="spin one" /></label>
          <label for="att">Attributes:</label><input id="att" type="text" />
          <button class="flt" aria-label="Filter attributes"><Ico n="funnel" :s="14" /></button>
          <button class="flt box" aria-label="Attribute list"><Ico n="listadd" :s="13" /></button>
          <span class="fill" /><button class="plain" aria-label="Help"><Ico n="help" :s="16" /></button>
        </div>
        <div class="sheet">
          <div class="sheet-main">
            <table>
              <thead><tr><th /><th>P[x]</th><th>P[y]</th><th>P[z]</th><th class="rest" /></tr></thead>
              <tbody><tr v-for="(r, k) in points" :key="k"><th>{{ k < 5 ? k : '' }}</th><td v-for="(c, j) in r" :key="j">{{ c }}</td><td class="rest" /></tr></tbody>
            </table>
            <span class="tag">Indie</span>
          </div>
          <div class="vscroll"><span class="thumb"><i class="dots tall" /></span><span class="fill" /><button class="dim" aria-label="Scroll up">▲</button><button aria-label="Scroll down">▼</button></div>
        </div>
        <div class="hscroll"><span class="fill" /><i class="dots wide" /><span class="fill" /><button aria-label="Scroll left">◀</button><button aria-label="Scroll right">▶</button></div>
      </div>

      <div class="edge mid"><i class="car">◀</i><i class="dots" /><i class="car">▶</i></div>

      <div class="col right">
        <div class="tabs">
          <div v-for="(t, k) in panes.parm" :key="t" class="tab" :class="{ on: !k, it: !k }"><button>{{ t }}</button><button class="x" :aria-label="'Close ' + t">×</button></div>
          <button class="add" aria-label="Add pane tab" /><span class="fill" /><i class="sq" /><button class="tri" aria-label="Pane options">▼</button>
        </div>
        <div class="pathrow">
          <button class="plain" aria-label="Back"><Ico n="back" :s="17" /></button><button class="plain" aria-label="Forward"><Ico n="fwd" :s="17" /></button>
          <div class="path"><a href="#obj"><Ico n="clap" :s="18" />obj</a><svg class="chev" viewBox="0 0 8 24"><path d="m1 0 6 12-6 12" fill="none" stroke="#151515" stroke-width="2" /></svg><a href="#beam"><Ico n="combo" :s="18" />beam</a><span class="fill" /><button class="drop" aria-label="Path history">▼</button></div>
          <Ico class="pin" n="pin" :s="17" /><Ico n="rings" :s="18" />
        </div>
        <div class="mergerow">
          <button class="plain fly down" aria-label="Node type"><Ico n="merge" :s="18" /></button>
          <label for="nm">Merge</label><input id="nm" type="text" value="merge1" />
          <button class="plain fly down" aria-label="Gear menu"><Ico n="gear" :s="16" /></button><button class="plain fly down" aria-label="Presets"><Ico n="brush" :s="16" /></button><button class="plain" aria-label="Search"><Ico n="search" :s="16" /></button><button class="plain" aria-label="Info"><Ico n="info" :s="16" /></button><button class="plain" aria-label="Help"><Ico n="help" :s="16" /></button>
        </div>
        <div class="parm">
          <div class="parm-body">
            <table>
              <thead><tr><th class="c" /><th>Input Operators (Drag/Drop to reorder)</th><th class="c" /></tr></thead>
              <tbody>
                <tr v-for="(t, k) in ['bend1', 'attribwrangle4']" :key="t" :class="{ sel: !k }"><td class="c"><button :aria-label="'Go to ' + t"><Ico n="up" :s="13" /></button></td><td>{{ t }}</td><td class="c"><button :aria-label="'Remove ' + t"><Ico n="del" :s="12" /></button></td></tr>
              </tbody>
            </table>
          </div>
          <div class="parm-scroll" />
        </div>

        <div class="split"><i>▲</i><i class="dots flat" /><i>▼</i></div>

        <div class="tabs">
          <div v-for="(t, k) in panes.net" :key="t" class="tab" :class="{ on: !k, it: !k }"><button>{{ t }}</button><button class="x" :aria-label="'Close ' + t">×</button></div>
          <button class="add" aria-label="Add pane tab" /><span class="fill" /><i class="sq" /><button class="tri" aria-label="Pane options">▼</button>
        </div>
        <div class="pathrow">
          <button class="plain" aria-label="Back"><Ico n="back" :s="17" /></button><button class="plain" aria-label="Forward"><Ico n="fwd" :s="17" /></button>
          <div class="path"><a href="#obj"><Ico n="clap" :s="18" />obj</a><svg class="chev" viewBox="0 0 8 24"><path d="m1 0 6 12-6 12" fill="none" stroke="#151515" stroke-width="2" /></svg><a href="#beam"><Ico n="combo" :s="18" />beam</a><span class="fill" /><button class="drop" aria-label="Path history">▼</button></div>
          <Ico class="pin" n="pin" :s="17" /><Ico n="rings" :s="18" />
        </div>
        <div class="netbar">
          <span class="grip">▲</span>
          <nav class="menu"><button v-for="m in netMenu" :key="m">{{ m }}</button></nav>
          <div class="neticons"><span v-for="(g, k) in netIcons" :key="k"><button v-for="n in g" :key="n" class="plain" :aria-label="n"><Ico :n="n" :s="16" /></button></span></div>
        </div>
        <div class="net">
          <svg viewBox="0 0 658 340" preserveAspectRatio="xMinYMin slice" role="img" aria-label="Network">
            <rect x="194" y="16" width="123" height="43" fill="#bfb969" stroke="#e8e07a" />
            <rect x="194" y="16" width="123" height="6" fill="#ece47c" /><rect x="196" y="17" width="3" height="2" fill="#777" />
            <text x="196" y="46" class="ng">NG</text>
            <text x="271" y="32" class="wm">Indie Edition</text>
            <rect x="180" y="67" width="181" height="280" fill="#5a5a5a" stroke="#6e6e6e" /><rect x="180" y="67" width="181" height="7" fill="#757575" /><path d="M183 70h8" stroke="#333" stroke-width="2" />
            <circle cx="255" cy="169" r="27" fill="#64738e" /><circle cx="255" cy="169" r="18" fill="#8273a3" />
            <g fill="none" stroke="#6f8fb5" stroke-width="1">
              <path d="m246 90-4 14M330 87l-10 39M247 112q0 3 3 3h15q4 0 4 5M275 129q0 4 4 3l40-4q5-1 5 4M255 192l-8 8v4M231 240l-6 14M231 263l-4 11M231 282v11M231 301v10M231 319v11M231 338v6" />
              <path d="m197 187 30 43M253 211l-19 19" stroke-dasharray="2 2" />
            </g>
            <g fill="none" stroke="#a0b184" stroke-width="1"><path d="m246 112 6 45M325 140q0 5-4 6l-59 12q-4 1-4 6M255 173l-4 10" /></g>
            <rect x="244" y="164" width="23" height="11" rx="5" fill="#111" stroke="#ffd21c" stroke-width="2" />
            <g v-for="n in nodes" :key="n.l">
              <path v-if="n.wave" :d="`M${n.x - 10} ${n.y - 3}q5-2 10 0t10 0v7q-5 1-10 0t-10 0z`" fill="#ccc" />
              <rect v-else :x="n.x - 10" :y="n.y - 3" width="20" height="6" rx="1" fill="#ccc" />
              <rect :x="n.x - 2" :y="n.y - 2" width="4" height="4" :fill="n.c" />
              <text :x="n.x + 11" :y="n.y" class="nl">{{ n.l }}</text>
              <circle v-if="n.d" :cx="n.x + 13" :cy="n.y + 4" r="1.500" :fill="n.d" />
            </g>
          </svg>
          <strong>Geometry</strong>
        </div>
      </div>
    </main>

    <footer class="bar">
      <span class="grip low">▼</span>
      <div class="playbar">
        <div class="row top">
          <div class="btns">
            <button aria-label="First frame"><Ico n="first" /></button><button aria-label="Play backward"><Ico n="prev" :s="16" /></button><button class="lit" aria-label="Stop"><Ico n="stop" :s="17" /></button><button aria-label="Play"><Ico n="play" :s="16" /></button><button aria-label="Last frame"><Ico n="last" /></button>
          </div>
          <input v-model="frame" class="cur" type="text" aria-label="Current frame" />
          <div class="btns steps"><button aria-label="Previous frame"><Ico n="stepb" :s="11" /></button><button aria-label="Next frame"><Ico n="stepf" :s="11" /></button></div>
          <div class="timeline">
            <svg width="100%" height="100%" aria-hidden="true">
              <path d="M0 22h4000" stroke="#bdbdbd" stroke-width="1" />
              <template v-for="t in ticks" :key="t">
                <line :x1="at(t)" :x2="at(t)" :y1="t % 24 ? 18 : 15" :y2="t % 24 ? 27 : 30" stroke="#9c9c9c" />
                <text v-if="t % 24 === 0" :x="at(t)" y="9">{{ t }}</text>
              </template>
            </svg>
            <span class="head">{{ frame }}</span>
            <input v-model="frame" type="range" min="1" max="300" aria-label="Frame" />
          </div>
        </div>
        <div class="row">
          <div class="btns">
            <button aria-label="Scoped channels"><Ico n="page" /></button><button aria-label="Audio"><Ico n="sound" /></button><button class="fly down" aria-label="Loop"><Ico n="loop" /></button><button aria-label="Real time"><Ico n="clock" /></button><button class="fly" aria-label="Snap frames"><Ico n="ticks" /></button><button aria-label="Keys"><Ico n="slide" /></button>
          </div>
          <div class="btns keysteps"><button aria-label="Previous key"><Ico n="kprev" :s="12" /></button><button aria-label="Next key"><Ico n="knext" :s="12" /></button></div>
          <input class="rng soft" type="text" value="1" aria-label="Global start" /><input class="rng" type="text" value="1" aria-label="Range start" />
          <div class="range"><i>▶</i><span /><i>◀</i><input type="range" min="1" max="300" value="300" aria-label="Playback range" /></div>
          <input class="rng" type="text" value="300" aria-label="Range end" /><input class="rng soft" type="text" value="300" aria-label="Global end" />
        </div>
      </div>
      <div class="keybox"><button class="keybtn" aria-label="Set key"><Ico n="key" :s="19" /></button><button class="keydrop" aria-label="Key options">▼</button></div>
      <div class="channels">
        <button class="ico fly" aria-label="Sync channels"><Ico n="keysync" /></button><button class="wide">0 keys, 0/0 channels<i>▲</i></button>
        <button class="ico" aria-label="Curves"><Ico n="curves" :s="17" /></button><label class="pick keyall"><select aria-label="Keying"><option>Key All Channels</option></select><i class="spin" /></label>
      </div>
    </footer>

    <div class="status">
      <span>Successfully saved qiita_mesh.hiplc (Tue Nov 25 23:28:31 2025)</span><span class="fill" />
      <div class="update"><button class="plain fly" aria-label="Cook"><Ico n="brain" :s="18" /></button><button class="plain" aria-label="Refresh"><Ico n="sync" :s="15" /></button><label class="pick auto"><select aria-label="Update mode"><option>Auto Update</option></select><i class="spin" /></label></div>
    </div>
  </div>
</template>

<style>
html, body { background: #2d2d2d; }
</style>

<style scoped>
.app { --sans: "Noto Sans CJK JP", "Noto Sans", sans-serif; --mono: "Noto Sans Mono CJK JP", "Liberation Mono", monospace; --lit: linear-gradient(#5c7795, #7693b5); position: relative; display: flex; flex-direction: column; height: 100vh; min-height: 800px; overflow: hidden; background: #2d2d2d; color: #c4c4c4; font: 10px/14px var(--sans); }
.app *, .app *::before, .app *::after { box-sizing: border-box; }
.defs { position: absolute; }
button, input, select { margin: 0; padding: 0; border: 0; border-radius: 0; background: none; color: inherit; font: inherit; }
svg { display: block; flex: none; }
i { font-style: normal; }
a { color: inherit; text-decoration: none; }
.fill { flex: 1; }
.plain { position: relative; display: grid; place-items: center; flex: none; }
.grip { flex: none; width: 9px; padding-top: 1px; border-right: 2px solid #111; background: #474747; color: #080808; font-size: 8px; line-height: 8px; text-align: center; overflow: hidden; }
.grip.low { display: flex; align-items: flex-end; justify-content: center; padding-bottom: 1px; }
.dots { flex: none; width: 6px; height: 24px; background: radial-gradient(circle, #8b8b8b 1px, transparent 1px) 0 0 / 3px 3px; }
.dots.tall { height: 15px; background: radial-gradient(circle, #0a0a0a 1px, transparent 1px) 0 0 / 3px 3px; }
.dots.flat { width: 21px; height: 6px; }
.dots.wide { width: 12px; height: 9px; background: radial-gradient(circle, #0a0a0a 1px, transparent 1px) 0 0 / 3px 3px; }
.fly { position: relative; }
.fly::after { content: ""; position: absolute; right: 1px; bottom: 3px; border: 3px solid transparent; border-left: 4px solid #8a8a8a; border-right: 0; }
.fly.down::after { right: -3px; bottom: -3px; border: 3px solid transparent; border-top: 4px solid #8a8a8a; border-bottom: 0; }
.lit { background: var(--lit) !important; }
.lit.fly::after { border-left-color: #222; }

.menubar { display: flex; align-items: stretch; height: 26px; border-top: 1px solid #2b2b2b; border-bottom: 1px solid #0a0a0a; background: linear-gradient(#3c3c3c, #333); font-size: 12px; line-height: 18px; }
.menu { display: flex; gap: 8px; padding-left: 7px; align-items: center; }
.menubar .menu { margin-right: 29px; }
.pick { position: relative; display: flex; align-items: center; background: linear-gradient(#505050, #3e3e3e); }
.pick select { flex: 1; min-width: 0; height: 100%; appearance: none; outline: 0; opacity: 1; }
.spin { display: flex; flex-direction: column; align-items: center; justify-content: center; align-self: stretch; gap: 3px; width: 24px; background: #2f2f2f; pointer-events: none; }
.spin::before { content: ""; border: 3px solid transparent; border-bottom: 6px solid #888; border-top: 0; }
.spin::after { content: ""; border: 3px solid transparent; border-top: 6px solid #888; border-bottom: 0; }
.spin.one::before { display: none; }
.desk { width: 128px; margin: 1px 4px 0 0; padding-left: 5px; gap: 4px; border-left: 1px solid #5c5c5c; }
.take { width: 172px; margin: 1px 0 0; padding-left: 5px; gap: 4px; border: 1px solid #555; border-bottom-color: #1a1a1a; }
.help { width: 33px; }

.shelves { display: flex; height: 58px; border-bottom: 1px solid #0a0a0a; background: #222; }
.shelf { display: flex; flex-direction: column; min-width: 0; }
.shelf.left { flex: 956 1 0; }
.shelf.right { flex: 945 1 0; }
.shelf-split { display: grid; place-items: center; width: 10px; border: solid #0a0a0a; border-width: 0 1px; background: #4a4a4a; }
.shelf-tabs { display: flex; height: 18px; background: #232323; font-size: 9px; line-height: 13px; }
.shelf-tabs > button { flex: none; padding: 1px 6px 0; border-right: 1px solid #0a0a0a; border-bottom: 1px solid #0a0a0a; border-top: 1px solid #3c3c3c; background: #2d2d2d; white-space: nowrap; }
.shelf-tabs > .on { border-color: #494949; background: #494949; }
.left .shelf-tabs > .on { padding-right: 12px; }
.shelf-tabs > .add, .shelf-tabs > .tri { border: 0; background: none; }
.add { position: relative; width: 26px; }
.add::before, .add::after { content: ""; position: absolute; left: 9px; top: 50%; width: 9px; height: 3px; margin-top: -1px; background: #d6d6d6; }
.add::after { left: 12px; width: 3px; height: 9px; margin-top: -4px; }
.tri { width: 18px; color: #d6d6d6; font-size: 8px; line-height: 10px; }
.shelf-body { display: flex; flex: 1; min-height: 0; background: linear-gradient(#494949, #393939); }
.shelf-tools { display: flex; flex: 1; min-width: 0; overflow: hidden; }
.right .shelf-tools { padding-left: 12px; }
.shelf-tools button { flex: none; display: flex; flex-direction: column; align-items: center; padding-top: 2px; font-size: 9px; line-height: 12px; white-space: nowrap; }
.shelf-tools span { display: block; }
.shelf-tools .two { padding-top: 1px; line-height: 10px; }
.shelf-tools .two svg { height: 17px; }
.more { width: 18px; color: #999; font-size: 11px; }

.work { display: flex; flex: 1; min-height: 0; }
.edge { display: flex; flex-direction: column; align-items: center; justify-content: center; gap: 15px; flex: none; width: 7px; border-left: 1px solid #111; border-right: 1px solid #222; background: #444; }
.edge.mid { width: 8px; border-left: 2px solid #0a0a0a; }
.car { color: #999; font-size: 7px; line-height: 7px; }
.col { display: flex; flex-direction: column; flex: 1247 1 0; min-width: 0; }
.col.right { flex-grow: 658; }

.tabs { display: flex; flex: none; height: 19px; align-items: stretch; background: #2d2d2d; }
.tab { display: flex; align-items: center; gap: 9px; margin-right: 2px; padding: 0 6px 0 6px; border-right: 2px solid #222; background: #303030; white-space: nowrap; }
.dense .tab { gap: 6px; padding-right: 5px; }
.dense .tab.on:not(:nth-last-child(5)) { gap: 8px; }
.tab.on { border-right-color: #4b4b4b; background: #4b4b4b; }
.tab.it button:first-child { font-style: italic; }
.tab .x { width: 8px; font-size: 11px; font-weight: bold; line-height: 12px; }
.sq { width: 10px; height: 8px; align-self: center; margin-right: 4px; background: #dededb; }
.pathrow { display: flex; flex: none; align-items: center; height: 34px; padding: 0 4px 0 5px; border-bottom: 2px solid #151515; background: linear-gradient(#4b4b4b, #3a3a3a); font-size: 11px; line-height: 16px; }
.pathrow > .plain { width: 24px; }
.path { display: flex; flex: 1; align-items: center; height: 24px; margin: 0 7px 0 1px; border: 1px solid #0a0a0a; border-top-width: 2px; background: linear-gradient(#424242, #383838); }
.path a { display: flex; align-items: center; gap: 3px; padding-left: 5px; }
.path a + .chev { margin: 0 0 0 6px; }
.chev { width: 8px; height: 22px; }
.drop { width: 18px; height: 21px; background: #2d2d2d; color: #8b8b8b; font-size: 8px; }
.pin { margin: 0 5px 0 4px; }
.trio { display: flex; gap: 6px; margin-left: 16px; padding-right: 1px; }
.trio .fly.down::after { right: -3px; bottom: -2px; }

.viewbar { display: flex; flex: none; height: 31px; border-top: 2px solid #4b4b4b; background: #2e2e2e; }
.vb-l, .vb-r { display: flex; flex: 1 1 0; align-items: center; padding: 0 6px; }
.vb-r { justify-content: flex-end; gap: 9px; }
.vb-c { display: flex; align-items: center; gap: 3px; padding-right: 20px; }
.vb-c .plain { width: 22px; height: 25px; }
.vb-c .wide { width: 30px; }
.vb-c .fly.down::after { right: 2px; bottom: 1px; }
.vb-c .mid { width: 28px; }
.sep { width: 1px; height: 23px; background: #484848; }

.stage { display: flex; flex: 1; min-height: 0; }
.tools { display: flex; flex: none; flex-direction: column; align-items: center; width: 34px; overflow: hidden; background: #393939; }
.slim { flex: none; align-self: stretch; height: 10px; margin-top: 1px; border-bottom: 1px solid #111; background: #505050; color: #080808; font-size: 7px; line-height: 9px; padding: 0 2px; }
.slim.end { text-align: right; }
.modes { display: flex; flex-direction: column; flex: none; margin: 6px 0 7px; border: 1px solid #111; background: #4a4a4a; }
.modes button { display: grid; place-items: center; width: 24px; height: 24px; border-bottom: 1px solid #333; }
hr { flex: none; align-self: stretch; width: auto; height: 1px; margin: 0 2px; border: 0; background: #555; }
.tools .space { flex: none; height: 19px; }
.tool { display: grid; flex: none; place-items: center; width: 28px; height: 28px; }
.tool.lit, .display .lit { border: 1px solid #4a5a6b; }
.tools hr + .tool { margin-top: 4px; }
.tools .tool + hr { margin-top: 3px; }
.tool.low { height: 26px; }
.caret { flex: none; height: 16px; color: #8a8a8a; font-size: 9px; line-height: 16px; }
.view { position: relative; flex: 1; min-width: 0; background: #000; overflow: hidden; }
.scene { position: absolute; inset: 0; width: 100%; height: 100%; }
.axis { font: 14px var(--sans); }
.blue { fill: #3e3e66; }
.red { fill: #4f2f2f; }
.gnomon { font: 11px var(--sans); }
.hud-l { position: absolute; left: 16px; top: 15px; display: flex; align-items: center; gap: 11px; color: #fff; font-size: 13px; line-height: 24px; }
.hud-r { position: absolute; right: 5px; top: 5px; display: flex; gap: 7px; font-size: 11px; line-height: 16px; }
.hud-r button { display: flex; align-items: center; gap: 3px; height: 21px; padding: 0 6px; border: 1px solid #9a9a9a; border-radius: 10px; background: #080808; color: #bbb; }
.hud-r i { border: 3px solid transparent; border-top: 4px solid #ccc; border-bottom: 0; }
.indie { position: absolute; right: 13px; bottom: 9px; color: #b5b51c; font-size: 11px; line-height: 16px; }
.display { display: flex; flex: none; flex-direction: column; align-items: center; width: 26px; overflow: hidden; background: #393939; }
.display .space { flex: none; height: 19px; }
.display button { position: relative; display: grid; flex: none; place-items: center; width: 23px; height: 24px; margin-bottom: 1px; }
.display hr { margin: 1px 1px 4px; }
.display b { position: absolute; right: 1px; top: 1px; color: #ddd; font-size: 9px; line-height: 12px; }
.peek { flex: none; width: 23px; height: 5px; background: #4d667f; }

.split { display: flex; flex: none; align-items: center; justify-content: center; gap: 12px; height: 6px; border-top: 1px solid #666; background: #484848; color: #888; font-size: 6px; line-height: 6px; overflow: hidden; }
.right .split { height: 7px; }

.noderow { display: flex; flex: none; align-items: center; height: 29px; padding: 0 7px 0 6px; border-top: 1px solid #666; border-bottom: 2px solid #0e0e0e; background: #2d2d2d; font-size: 10px; line-height: 16px; }
.node { width: 225px; font-size: 11px; }
.kinds { display: flex; margin-right: 3px; }
.kinds button, .flt { display: grid; place-items: center; width: 20px; height: 21px; border-right: 1px solid #111; background: #474747; }
.noderow input { flex: 0 1 178px; min-width: 40px; height: 21px; margin: 0 2px; border: 1px solid #262626; background: #121212; }
.flt { border: 1px solid #0e0e0e; background: #2a2a2a; }
.flt.box { width: 18px; margin-left: 4px; background: #484848; }
.view-pick { width: 107px; height: 21px; margin-left: 4px; border: 1px solid #1c1c1c; font-size: 11px; }
.view-pick select { padding-left: 13px; }
.view-pick + .view-pick { width: 128px; margin: 0 3px 0 2px; }
.view-pick.off { background: #303030; color: #6c6c6c; }
.view-pick.off select { opacity: 1; color: #6c6c6c; }
.view-pick.off .spin { opacity: .4; }

.sheet { display: flex; flex: none; height: 114px; padding-left: 1px; background: #2d2d2d; }
.sheet-main { position: relative; flex: 1; min-width: 0; overflow: hidden; border-bottom: 1px solid #555; }
.sheet table { width: 100%; border-collapse: collapse; table-layout: fixed; font: 14px/17px var(--mono); }
.sheet th, .sheet td { width: 85px; height: 18px; padding: 0 0 0 4px; border-right: 1px solid #141414; text-align: left; font-weight: normal; }
.sheet .rest { width: auto; border-right: 0; }
.sheet thead th { height: 16px; border: 1px solid #141414; border-left-color: #333; background: linear-gradient(#3b3b3b, #2b2b2b); font: 11px/14px var(--sans); }
.sheet tbody th { border-bottom: 1px solid #111; background: linear-gradient(#3b3b3b, #303030); font: 12px/17px var(--sans); }
.sheet tbody tr:nth-child(even) { background: #393939; }
.tag { position: absolute; right: 7px; bottom: -1px; font-size: 11px; color: #ddd; }
.vscroll { display: flex; flex: none; flex-direction: column; width: 15px; border-left: 1px solid #555; background: #262626; color: #999; }
.thumb { display: grid; place-items: center; height: 26px; background: #555; }
.vscroll button { height: 18px; border-top: 1px solid #111; background: #484848; font-size: 8px; line-height: 10px; }
.vscroll .dim, .hscroll button { background: #3a3a3a; color: #5a5a5a; }
.hscroll { display: flex; flex: none; align-items: center; height: 14px; padding-right: 14px; background: #363636; }
.hscroll button { width: 18px; font-size: 8px; line-height: 10px; }

.mergerow { display: flex; flex: none; align-items: center; gap: 10px; height: 27px; padding: 0 6px 0 4px; border-bottom: 1px solid #0a0a0a; background: #3a3a3a; font-size: 11px; font-weight: bold; }
.mergerow label { margin-left: -6px; }
.mergerow input { flex: 1; min-width: 0; height: 22px; margin: 0 -1px 0 -6px; padding-left: 2px; border: 1px solid #2b2b2b; background: #121212; color: #d8d8d8; font: 14px/20px var(--mono); }
.parm { display: flex; flex: 302 1 0; min-height: 0; padding: 4px 2px 3px; background: #3a3a3a; }
.parm-body { flex: 1; min-width: 0; background: #282828; }
.parm table { width: 100%; border-collapse: collapse; font-size: 11px; line-height: 15px; }
.parm th, .parm td { height: 17px; padding: 0 2px; text-align: left; font-weight: normal; }
.parm thead th { height: 16px; border: 1px solid #0e0e0e; background: linear-gradient(#3b3b3b, #2d2d2d); line-height: 14px; }
.parm tbody td { background: #303030; }
.parm .c { width: 17px; padding: 0; border-right: 1px solid #666; }
.parm .c button { display: grid; place-items: center; width: 100%; height: 15px; }
.parm .sel td { border: 1px solid #d8d8d8; background: #363636; }
.parm-scroll { width: 15px; margin-left: 1px; background: #333; border: 1px solid #1e1e1e; }

.netbar { display: flex; flex: none; height: 25px; border-bottom: 1px solid #0a0a0a; background: #353535; font-size: 12px; line-height: 18px; }
.netbar .grip { width: 10px; }
.netbar .menu { gap: 13px; padding-left: 7px; }
.neticons { display: flex; flex: 1; align-items: center; justify-content: space-between; max-width: 312px; margin-left: auto; padding-right: 4px; }
.neticons span { display: flex; gap: 8px; }
.net { position: relative; flex: 344 1 0; min-height: 0; overflow: hidden; background: #303030; }
.net svg { width: 100%; height: 100%; }
.net strong { position: absolute; right: 12px; top: 12px; color: #4c4c4c; font-size: 23px; line-height: 32px; }
.wm { fill: #808080; fill-opacity: .24; font: 19px var(--sans); }
.ng { fill: #111; font: 17px var(--sans); }
.nl { fill: #a8a8a8; font: 4px var(--sans); }

.bar { display: flex; flex: none; height: 71px; border-top: 1px solid #6a6a6a; border-bottom: 1px solid #0a0a0a; background: #2e2e2e; }
.playbar { display: flex; flex: 1; flex-direction: column; min-width: 0; padding: 0 0 0 6px; }
.row { display: flex; align-items: center; height: 32px; }
.row.top { height: 38px; }
.btns { display: flex; border: 1px solid #111; }
.btns button { display: grid; place-items: center; width: 27px; height: 26px; border-right: 1px solid #151515; background: linear-gradient(#505050, #3c3c3c); }
.btns button:last-child { border-right: 0; }
.row:not(.top) .btns button { height: 22px; }
.btns .down::after { right: 2px; bottom: 1px; }
.row .cur { width: 47px; height: 27px; margin: 0 1px 0 3px; padding-left: 2px; background: #121212; border: 1px solid #262626; font: 14px/20px var(--mono); }
.steps .plain, .btns.steps button { width: 13px; }
.row .keysteps { margin: 0 6px 0 3px; }
.row .keysteps button { width: 22px; height: 20px; background: #383838; }
.timeline { position: relative; flex: 1; height: 38px; margin-left: 4px; }
.timeline text { fill: #9c9c9c; font: 9px var(--sans); }
.timeline input, .range input { position: absolute; inset: 0; width: 100%; height: 100%; opacity: 0; }
.head { position: absolute; left: 0; top: 1px; width: 25px; height: 19px; border: 1px solid #f0f0f0; background: #0a0a0a; color: #fff; font: 15px/17px var(--mono); text-align: center; }
.rng { flex: none; width: 41px; height: 21px; padding-left: 3px; border: 1px solid #232323; background: #121212; color: #ddd; font: 14px/19px var(--mono); }
.rng + .rng { margin-left: 4px; }
.soft { background: #242424; }
.range { position: relative; display: flex; flex: 1; align-items: center; margin: 0 3px 0 1px; color: #a5a5a5; font-size: 11px; line-height: 12px; }
.range span { flex: 1; height: 3px; margin: 0 -2px; background: #777; }
.keybox { display: flex; flex: none; align-items: center; width: 65px; }
.keybtn { z-index: 1; display: grid; flex: none; place-items: center; width: 40px; height: 40px; margin-left: 3px; border: 1px solid #191919; border-radius: 50%; background: #363636; }
.keydrop { flex: none; width: 18px; height: 21px; margin-left: -3px; background: #404040; color: #999; font-size: 8px; line-height: 10px; }
.channels { display: grid; flex: none; grid-template-columns: 23px 153px; gap: 5px 6px; align-content: center; padding: 0 6px 1px 0; font-size: 11px; line-height: 18px; }
.channels button, .channels .pick { height: 24px; border: 1px solid #151515; background: linear-gradient(#505050, #3c3c3c); }
.channels .ico { display: grid; place-items: center; }
.channels .wide { display: flex; align-items: center; justify-content: space-between; padding: 0 4px 0 16px; }
.wide i { color: #909090; font-size: 9px; }
.channels .pick { height: 22px; }
.keyall select { padding-left: 12px; }
.status { display: flex; flex: none; align-items: center; height: 25px; padding: 0 0 2px 2px; background: #191919; font-size: 11px; line-height: 18px; }
.update { display: flex; align-self: stretch; background: #383838; }
.update .plain { width: 27px; }
.auto { width: 118px; border-left: 1px solid #666; }
.auto select { padding-left: 14px; }
</style>
